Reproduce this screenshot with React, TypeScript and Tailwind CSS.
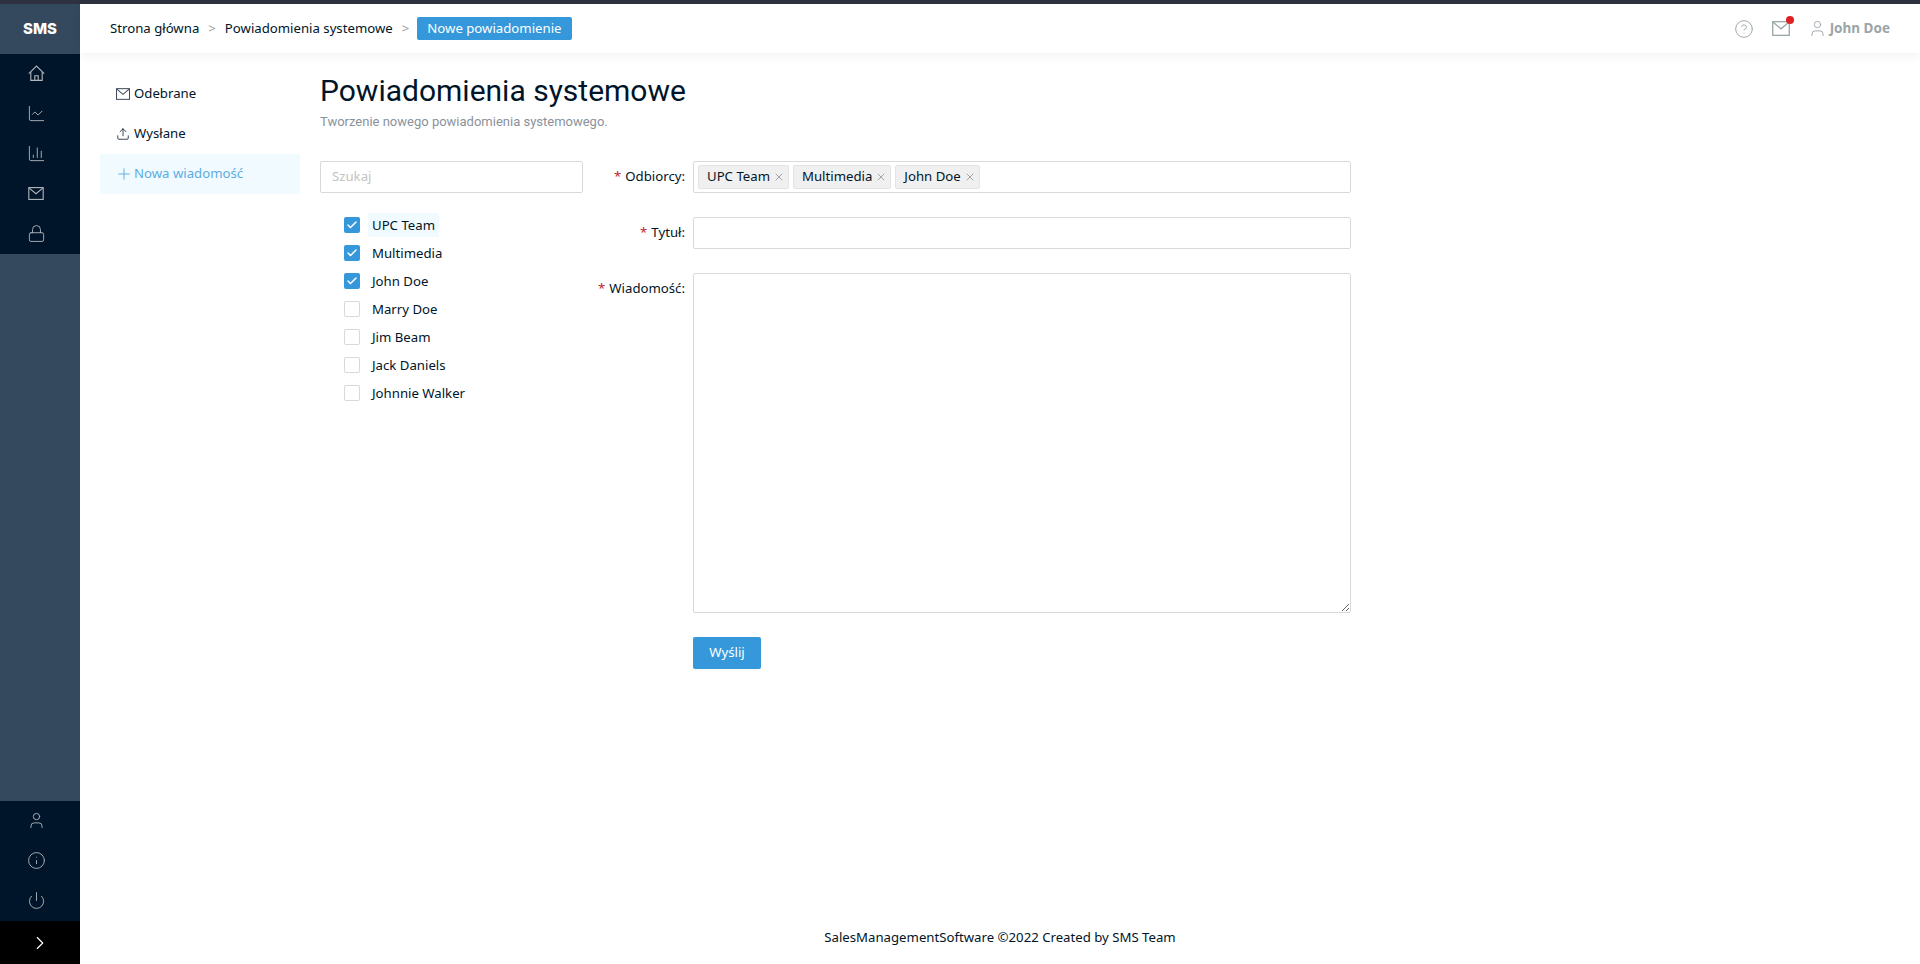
import * as React from 'react';
import { ChevronRight, ChartLine, ChartColumn, Lock, User, Info, Power, CircleHelp, Upload, Plus, X, Check } from 'lucide-react';

const font = "font-['Noto_Sans','Open_Sans',sans-serif]";

function HomeIcon() {
  return (
    <svg width="17" height="17" viewBox="0 0 17 17" fill="none" stroke="currentColor" strokeWidth="1.1">
      <path d="M0.8 8.6 8.5 1l7.7 7.6" />
      <path d="M2.8 7v8.4h11.4V7" />
      <path d="M6.8 15.4v-4.6h3.4v4.6" />
    </svg>
  );
}

function MailIcon({ size = 16, className }: { size?: number; className?: string }) {
  return (
    <svg width={size} height={Math.round(size * 0.84)} viewBox="0 0 16 13.4" fill="none" stroke="currentColor" strokeWidth="1.15" className={className}>
      <rect x="0.6" y="0.6" width="14.8" height="12.2" />
      <path d="M1 1.2 8 7l7-5.8" />
    </svg>
  );
}

const topIcons = [
  <HomeIcon key="home" />,
  <ChartLine key="line" size={19} strokeWidth={1.15} />,
  <ChartColumn key="bars" size={19} strokeWidth={1.15} />,
  <MailIcon key="mail" />,
  <Lock key="lock" size={19} strokeWidth={1.15} />,
];

const bottomIcons = [
  <User key="user" size={19} strokeWidth={1.15} />,
  <Info key="info" size={19} strokeWidth={1.15} />,
  <Power key="power" size={19} strokeWidth={1.15} />,
];

const people = [
  { name: 'UPC Team', checked: true, hover: true },
  { name: 'Multimedia', checked: true },
  { name: 'John Doe', checked: true },
  { name: 'Marry Doe', checked: false },
  { name: 'Jim Beam', checked: false },
  { name: 'Jack Daniels', checked: false },
  { name: 'Johnnie Walker', checked: false },
];

function Sidebar() {
  return (
    <aside className="flex w-20 shrink-0 flex-col bg-[#34495e]">
      <div className="flex h-[50px] items-center justify-center text-[15px] font-extrabold text-white font-['Inter',sans-serif]">SMS</div>
      <nav className="flex h-[200px] flex-col bg-[#001529]">
        {topIcons.map((icon, i) => (
          <div key={i} className="flex h-10 items-center justify-center pb-[2px] pr-[8px] text-[#b0b6bc]">
            {icon}
          </div>
        ))}
      </nav>
      <div className="flex-1" />
      <nav className="flex h-[120px] flex-col bg-[#001529]">
        {bottomIcons.map((icon, i) => (
          <div key={i} className="flex h-10 items-center justify-center pb-[2px] pr-[8px] text-[#b0b6bc]">
            {icon}
          </div>
        ))}
      </nav>
      <div className="flex h-[43px] items-center justify-center bg-black text-white">
        <ChevronRight size={22} strokeWidth={1.25} />
      </div>
    </aside>
  );
}

function Header() {
  return (
    <header className="relative flex h-[49px] shrink-0 items-center justify-between bg-white pl-[30px] pr-[30px] shadow-[0_2px_12px_rgba(0,0,0,0.06)]">
      <div className="flex items-center text-[13.2px] text-[#001529]">
        <span>Strona główna</span>
        <span className="mx-[9px] text-[#999]">&gt;</span>
        <span>Powiadomienia systemowe</span>
        <span className="ml-[9px] mr-[8px] text-[#999]">&gt;</span>
        <span className="flex h-[23px] items-center rounded-[2px] bg-[#3498db] px-[10px] text-white">Nowe powiadomienie</span>
      </div>
      <div className="flex items-center text-[#9aa5a8]">
        <CircleHelp size={20} strokeWidth={1.15} />
        <div className="relative ml-[18px]">
          <MailIcon size={18} />
          <span className="absolute -right-[4px] -top-[5px] h-2 w-2 rounded-full bg-[#e02020]" />
        </div>
        <User size={19} strokeWidth={1.15} className="ml-[18px]" />
        <span className="ml-[3px] text-[13.5px] font-bold">John Doe</span>
      </div>
    </header>
  );
}

function SideMenu() {
  return (
    <div className="flex w-[200px] shrink-0 flex-col pt-[21px] text-[13.2px] text-[#001529]">
      <div className="flex h-10 items-center pl-[16px]">
        <MailIcon size={14} className="mr-[4px] text-[#3d4a5c]" />
        <span>Odebrane</span>
      </div>
      <div className="flex h-10 items-center pl-[16px]">
        <Upload size={14} strokeWidth={1.35} className="mr-[4px]" />
        <span>Wysłane</span>
      </div>
      <div className="flex h-10 items-center rounded-[2px] bg-[#f0faff] pl-[15px] text-[#5dade2]">
        <Plus size={18} strokeWidth={1.25} className="mr-[1px]" />
        <span>Nowa wiadomość</span>
      </div>
    </div>
  );
}

function Recipients() {
  return (
    <div className="w-[263px] shrink-0">
      <div className="flex h-[32px] items-center rounded-[2px] border border-[#d9d9d9] px-[11px] text-[13.2px] text-[#c4c4c4]">Szukaj</div>
      <ul className="mt-[18px] pl-[24px] text-[13.2px] text-[#001529]">
        {people.map((p) => (
          <li key={p.name} className="flex h-[28px] items-center">
            {p.checked ? (
              <span className="flex h-4 w-4 items-center justify-center rounded-[2px] bg-[#3498db] text-white">
                <Check size={12} strokeWidth={3} />
              </span>
            ) : (
              <span className="h-4 w-4 rounded-[2px] border border-[#d9d9d9]" />
            )}
            <span className={`ml-[8px] rounded-[2px] px-[4px] leading-[24px] ${p.hover ? 'bg-[#f0faff]' : ''}`}>{p.name}</span>
          </li>
        ))}
      </ul>
    </div>
  );
}

function Label({ children }: { children: React.ReactNode }) {
  return (
    <div className="flex h-[32px] w-[110px] shrink-0 items-center justify-end pr-[8px] text-[13.2px] text-[#001529]">
      <span className="mr-[4px] text-[#c0272d]">*</span>
      {children}:
    </div>
  );
}

function Form() {
  return (
    <div className="flex w-[768px] flex-col">
      <div className="flex">
        <Label>Odbiorcy</Label>
        <div className="flex h-[32px] flex-1 items-center gap-[4px] rounded-[2px] border border-[#d9d9d9] px-[4px]">
          {people.filter((p) => p.checked).map((p) => (
            <span key={p.name} className="flex h-[24px] items-center rounded-[2px] border border-[#e4e4e4] bg-[#f0f0f0] pl-[8px] pr-[3px] text-[13.2px] text-[#001529]">
              {p.name}
              <X size={12} strokeWidth={1.25} className="ml-[3px] text-[#777]" />
            </span>
          ))}
        </div>
      </div>
      <div className="mt-[24px] flex">
        <Label>Tytuł</Label>
        <div className="h-[32px] flex-1 rounded-[2px] border border-[#d9d9d9]" />
      </div>
      <div className="mt-[24px] flex">
        <Label>Wiadomość</Label>
        <textarea className="h-[340px] flex-1 resize-y rounded-[2px] border border-[#d9d9d9] outline-none" />
      </div>
      <div className="mt-[24px] pl-[110px]">
        <button className="h-[32px] w-[68px] rounded-[2px] bg-[#3498db] text-[13.2px] text-white shadow-[0_2px_0_rgba(0,0,0,0.02)]">Wyślij</button>
      </div>
    </div>
  );
}

export default function App() {
  return (
    <div className={`flex h-[964px] flex-col overflow-hidden bg-white ${font}`}>
      <div className="h-[4px] shrink-0 bg-[#2e3240]" />
      <div className="flex min-h-0 flex-1">
        <Sidebar />
        <div className="flex min-w-0 flex-1 flex-col">
          <Header />
          <main className="flex flex-1 pl-[20px]">
            <SideMenu />
            <div className="pl-[20px] pt-[20px]">
              <h1 className="text-[30px] leading-[36px] text-[#001529] font-['Roboto',sans-serif]">Powiadomienia systemowe</h1>
              <p className="mt-[5px] text-[13px] leading-[16px] text-[#8a929a] font-['Roboto',sans-serif]">Tworzenie nowego powiadomienia systemowego.</p>
              <div className="mt-[31px] flex">
                <Recipients />
                <Form />
              </div>
            </div>
          </main>
          <footer className="flex h-[53px] shrink-0 items-center justify-center text-[13.2px] text-[#001529]">
            SalesManagementSoftware ©2022 Created by SMS Team
          </footer>
        </div>
      </div>
    </div>
  );
}
